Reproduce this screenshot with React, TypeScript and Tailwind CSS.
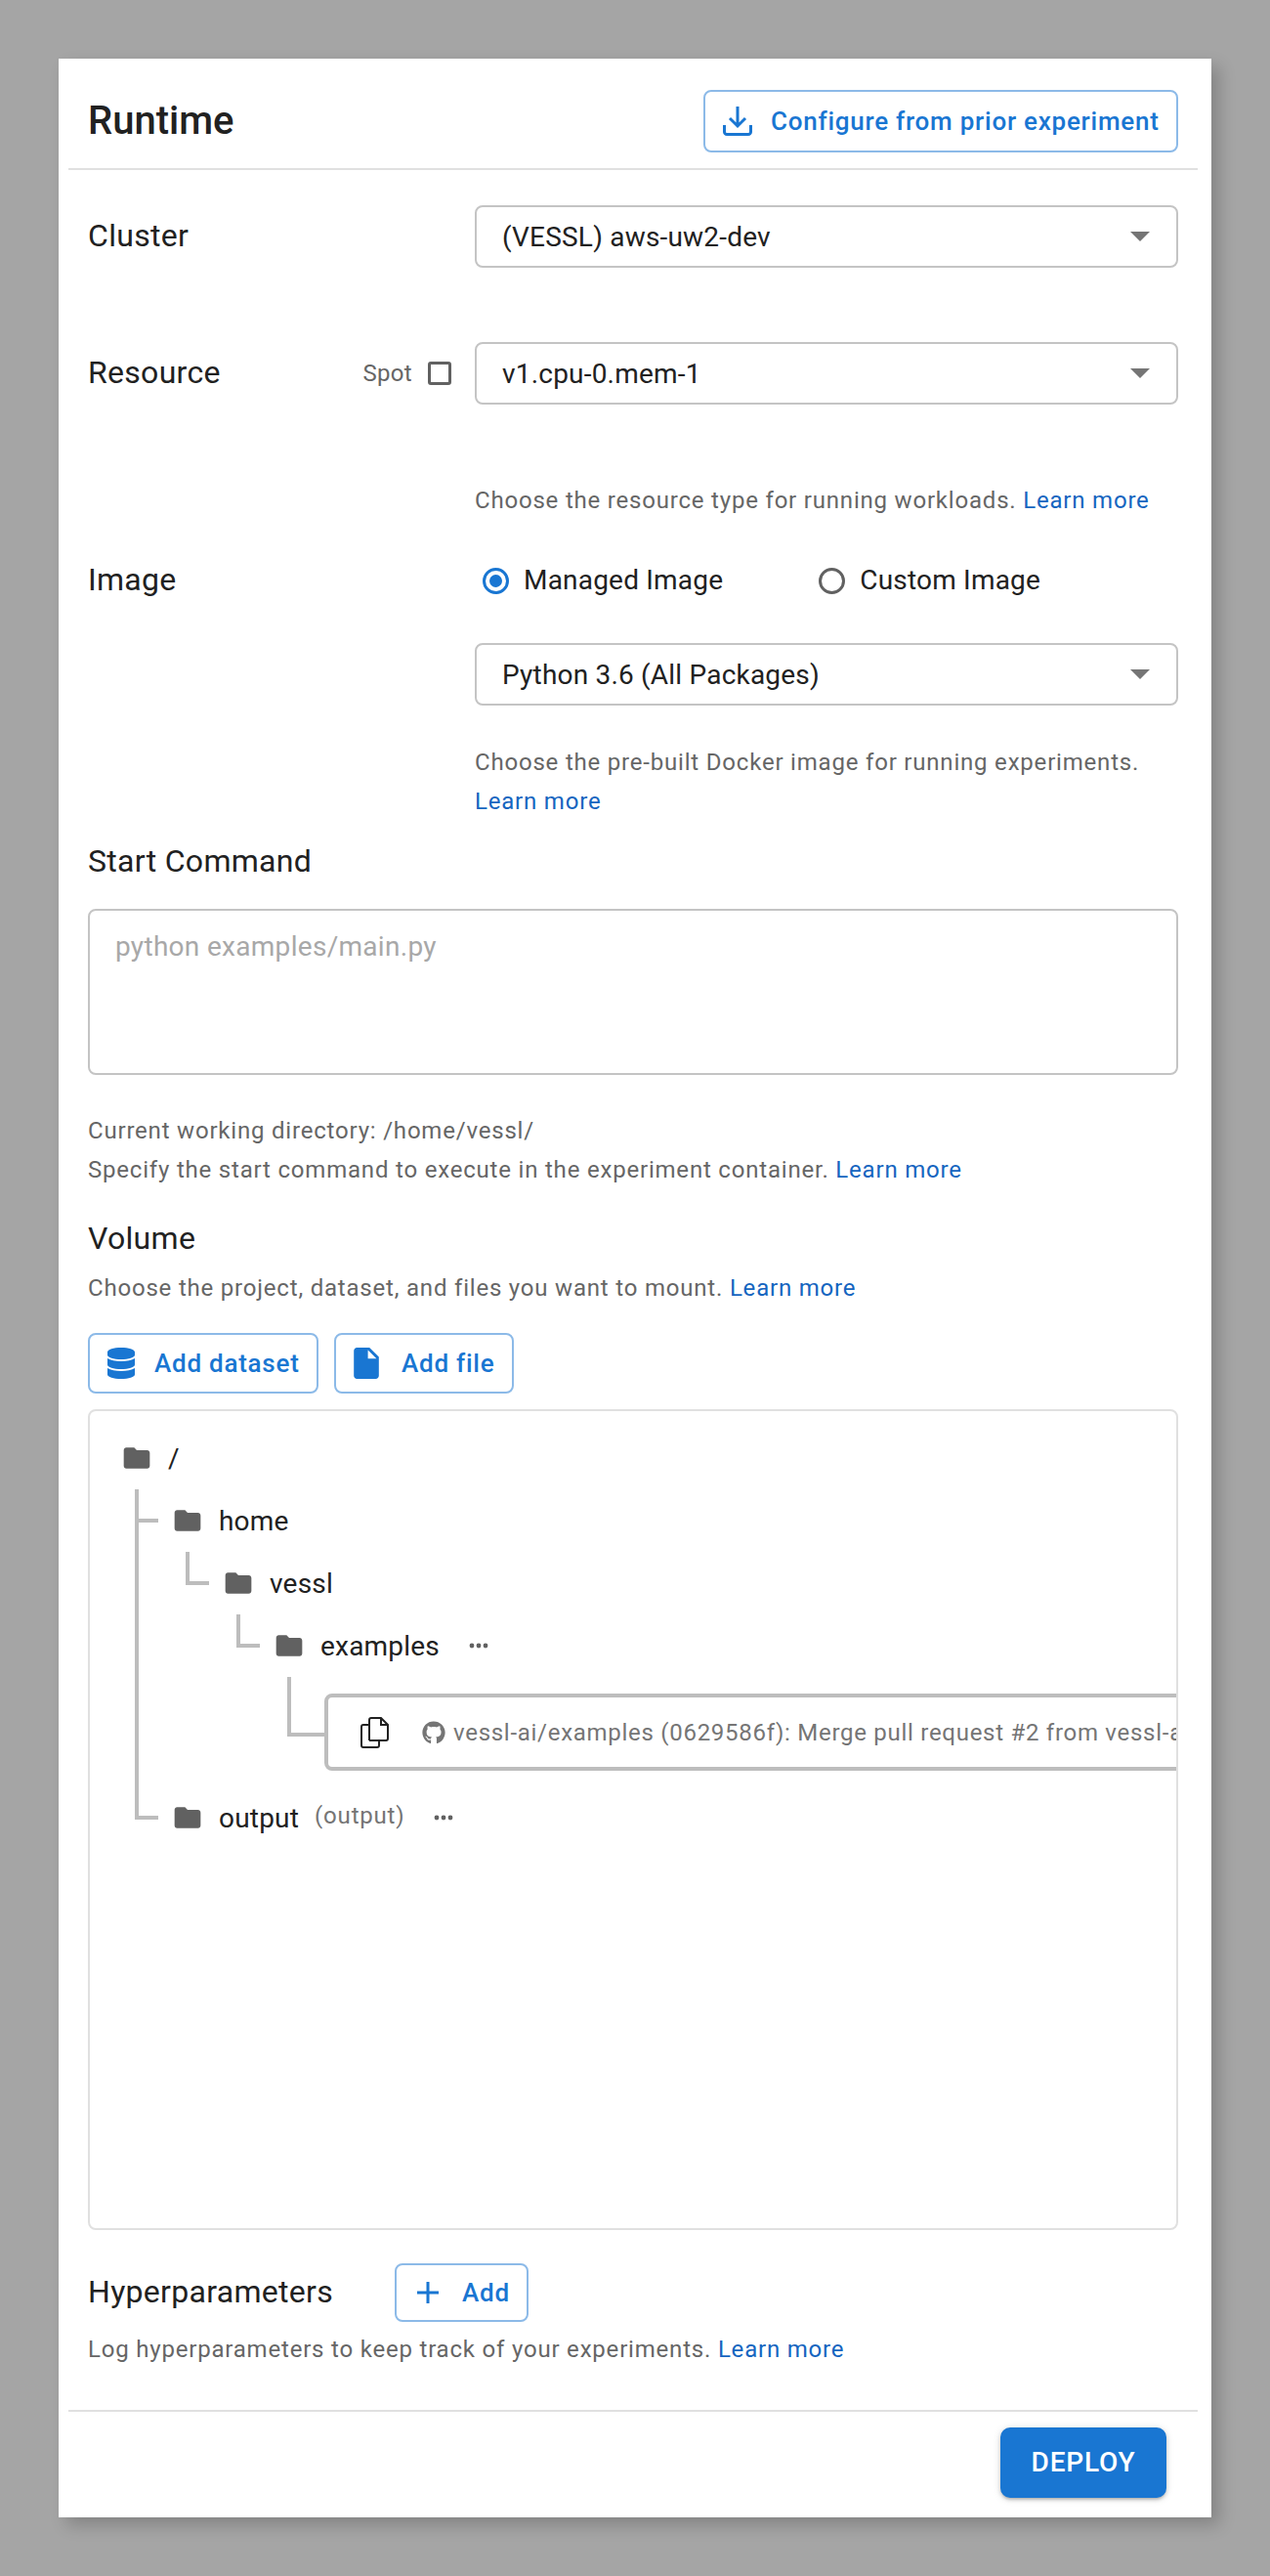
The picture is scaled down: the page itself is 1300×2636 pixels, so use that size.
import React from 'react';
import { FaDatabase, FaGithub } from 'react-icons/fa';

const FolderIcon = () => (
  <svg viewBox="0 0 24 24" className="w-8 h-8 shrink-0 fill-[#616161]">
    <path d="M10 4H4c-1.1 0-1.99.9-1.99 2L2 18c0 1.1.9 2 2 2h16c1.1 0 2-.9 2-2V8c0-1.1-.9-2-2-2h-8l-2-2z" />
  </svg>
);

const Dots = () => (
  <svg viewBox="0 0 20 6" className="w-5 h-[6px] fill-[#616161]">
    <circle cx="3" cy="3" r="2.4" />
    <circle cx="10" cy="3" r="2.4" />
    <circle cx="17" cy="3" r="2.4" />
  </svg>
);

const Select = ({ value }: { value: string }) => (
  <div className="flex items-center justify-between w-[720px] h-16 pl-[26px] pr-[27px] pt-[2px] border-2 border-[#c4c4c4] rounded-lg text-[28px] tracking-[0.2px] text-[#212121]">
    <span>{value}</span>
    <span className="w-0 h-0 -mt-[2px] border-x-[10px] border-x-transparent border-t-[10px] border-t-[#757575]" />
  </div>
);

const OutlineButton = ({ icon, label, className }: { icon: React.ReactNode; label: string; className: string }) => (
  <button className={`flex items-center border-2 border-[#8cbae8] rounded-lg text-[#1976d2] text-[26px] font-medium tracking-[0.75px] whitespace-nowrap ${className}`}>
    {icon}
    <span>{label}</span>
  </button>
);

const Help = ({ children, className = '' }: { children: React.ReactNode; className?: string }) => (
  <p className={`text-[24px] leading-10 tracking-[0.8px] text-[#666666] ${className}`}>{children}</p>
);

const LearnMore = () => <a className="text-[#1565c0]">Learn more</a>;

const Label = ({ children, className = '' }: { children: React.ReactNode; className?: string }) => (
  <h3 className={`text-[32px] leading-10 tracking-[0.3px] text-[#212121] ${className}`}>{children}</h3>
);

const Radio = ({ checked, label }: { checked?: boolean; label: string }) => (
  <div className="flex items-center gap-[15px] text-[28px] tracking-[0.2px] text-[#212121]">
    <span className={`flex items-center justify-center w-[27px] h-[27px] rounded-full border-[3px] ${checked ? 'border-[#1976d2]' : 'border-[#616161]'}`}>
      {checked && <span className="w-[13px] h-[13px] rounded-full bg-[#1976d2]" />}
    </span>
    {label}
  </div>
);

const TreeRow = ({ indent, children }: { indent: string; children: React.ReactNode }) => (
  <div className={`flex items-center h-16 gap-4 text-[28px] tracking-[0.2px] text-[#212121] ${indent}`}>
    <FolderIcon />
    <span className="pt-[2px]">{children}</span>
  </div>
);

const App: React.FC = () => {
  return (
    <div className="min-h-[2636px] bg-[#a5a5a5] pt-[60px] font-['Roboto',sans-serif]">
      <div className="w-[1180px] h-[2516px] ml-[60px] bg-white shadow-[8px_8px_16px_rgba(0,0,0,0.2)]">
        {/* Header */}
        <div className="flex items-center justify-between h-28 pt-4 pl-[30px] pr-[34px]">
          <h2 className="text-[40px] font-medium text-[#212121]">Runtime</h2>
          <OutlineButton
            className="w-[486px] h-16 pl-[18px]"
            label="Configure from prior experiment"
            icon={
              <svg viewBox="0 0 30 30" className="w-[30px] h-[30px] mr-[19px] fill-none stroke-[#1976d2] stroke-[3px]">
                <path d="M15 0v19M7 12l8 8 8-8" />
                <path d="M1.5 19v7a2.5 2.5 0 0 0 2.5 2.5h22a2.5 2.5 0 0 0 2.5-2.5v-7" />
              </svg>
            }
          />
        </div>
        <div className="h-[2px] w-[1156px] ml-[10px] bg-[#e0e0e0]" />

        <div className="pl-[30px] pr-[34px]">
          {/* Cluster */}
          <div className="flex items-center justify-between mt-9">
            <Label className="-mt-[2px]">Cluster</Label>
            <Select value="(VESSL) aws-uw2-dev" />
          </div>

          {/* Resource */}
          <div className="flex items-center justify-between mt-[76px]">
            <Label className="-mt-[2px]">Resource</Label>
            <div className="flex items-center">
              <span className="text-[24px] tracking-[0.3px] text-[#666666] mr-4">Spot</span>
              <span className="w-6 h-6 border-[3px] border-[#616161] rounded-[3px] mr-[24px]" />
              <Select value="v1.cpu-0.mem-1" />
            </div>
          </div>
          <Help className="mt-[78px] ml-[396px]">
            Choose the resource type for running workloads. <LearnMore />
          </Help>

          {/* Image */}
          <div className="flex mt-[42px]">
            <Label className="w-[396px] -mt-[1px]">Image</Label>
            <div className="w-[720px]">
              <div className="flex items-center h-10 pl-[8px] gap-[98px]">
                <Radio checked label="Managed Image" />
                <Radio label="Custom Image" />
              </div>
              <div className="mt-11">
                <Select value="Python 3.6 (All Packages)" />
              </div>
              <Help className="mt-[38px]">
                Choose the pre-built Docker image for running experiments. <LearnMore />
              </Help>
            </div>
          </div>

          {/* Start command */}
          <Label className="mt-[21px]">Start Command</Label>
          <textarea
            readOnly
            placeholder="python examples/main.py"
            className="block w-full h-[170px] mt-[29px] pt-[17px] pl-[26px] border-2 border-[#c4c4c4] rounded-lg text-[28px] leading-10 tracking-[0.3px] resize-none outline-none placeholder:text-[#a8a8a8]"
          />
          <Help className="mt-[37px]">Current working directory: /home/vessl/</Help>
          <Help>
            Specify the start command to execute in the experiment container. <LearnMore />
          </Help>

          {/* Volume */}
          <Label className="mt-[30px]">Volume</Label>
          <Help className="mt-[11px]">
            Choose the project, dataset, and files you want to mount. <LearnMore />
          </Help>
          <div className="flex gap-4 mt-[26px]">
            <OutlineButton
              className="w-[236px] h-[62px] pl-[18px]"
              label="Add dataset"
              icon={<FaDatabase className="w-7 h-8 mr-5 text-[#1976d2]" />}
            />
            <OutlineButton
              className="w-[184px] h-[62px] pl-[18px]"
              label="Add file"
              icon={
                <svg viewBox="4 2 16 20" className="w-[26px] h-8 mr-[23px] fill-[#1976d2]">
                  <path d="M6 2c-1.1 0-1.99.9-1.99 2L4 20c0 1.1.89 2 1.99 2H18c1.1 0 2-.9 2-2V8l-6-6H6zm7 7V3.5L18.5 9H13z" />
                </svg>
              }
            />
          </div>

          {/* File tree */}
          <div className="relative h-[840px] mt-4 pt-4 border-2 border-[#e0e0e0] rounded-lg overflow-hidden">
            <span className="absolute left-[46px] top-[80px] w-6 h-[338px] border-l-4 border-b-4 border-[#bdbdbd]" />
            <span className="absolute left-[50px] top-[110px] w-5 h-1 bg-[#bdbdbd]" />
            <span className="absolute left-[98px] top-[144px] w-6 h-[34px] border-l-4 border-b-4 border-[#bdbdbd]" />
            <span className="absolute left-[150px] top-[208px] w-6 h-[34px] border-l-4 border-b-4 border-[#bdbdbd]" />
            <span className="absolute left-[202px] top-[272px] w-[38px] h-[61px] border-l-4 border-b-4 border-[#bdbdbd]" />

            <TreeRow indent="ml-8">/</TreeRow>
            <TreeRow indent="ml-[84px]">home</TreeRow>
            <TreeRow indent="ml-[136px]">vessl</TreeRow>
            <div className="flex items-center">
              <TreeRow indent="ml-[188px]">examples</TreeRow>
              <span className="ml-[30px]">
                <Dots />
              </span>
            </div>
            <div className="h-28 pt-[17px] ml-[240px]">
              <div className="flex items-center w-[1000px] h-[79px] pl-[33px] border-4 border-[#bdbdbd] rounded-lg text-[24px] tracking-[0.72px] text-[#757575] whitespace-nowrap">
                <svg viewBox="0 0 29 32" className="w-[29px] h-8 mr-[34px] shrink-0 fill-none stroke-[#212121] stroke-2">
                  <path d="M9 24V3a2 2 0 0 1 2-2h10l7 7v14a2 2 0 0 1-2 2H9" />
                  <path d="M21 1v7h7" />
                  <path d="M9 8H3a2 2 0 0 0-2 2v19a2 2 0 0 0 2 2h14a2 2 0 0 0 2-2v-5" />
                </svg>
                <FaGithub className="w-6 h-6 mr-[8px] shrink-0 text-[#757575]" />
                vessl-ai/examples (0629586f): Merge pull request #2 from vessl-ai
              </div>
            </div>
            <div className="flex items-center">
              <TreeRow indent="ml-[84px]">output</TreeRow>
              <span className="ml-4 -mt-1 text-[24px] tracking-[0.8px] text-[#757575]">(output)</span>
              <span className="ml-[30px]">
                <Dots />
              </span>
            </div>
          </div>

          {/* Hyperparameters */}
          <div className="flex items-center mt-[34px]">
            <Label className="w-[314px] -mt-[2px]">Hyperparameters</Label>
            <OutlineButton
              className="w-[137px] h-[60px] pl-[21px]"
              label="Add"
              icon={
                <svg viewBox="0 0 22 22" className="w-[22px] h-[22px] mr-6 stroke-[#1976d2] stroke-[3px]">
                  <path d="M11 0v22M0 11h22" />
                </svg>
              }
            />
          </div>
          <Help className="mt-2">
            Log hyperparameters to keep track of your experiments. <LearnMore />
          </Help>
        </div>

        {/* Footer */}
        <div className="h-[2px] w-[1156px] ml-[10px] mt-[42px] bg-[#e0e0e0]" />
        <div className="flex justify-end mt-4 pr-[46px]">
          <button className="w-[170px] h-[72px] rounded-[10px] bg-[#1976d2] text-white text-[28px] font-medium tracking-[0.8px] shadow-[0_3px_3px_-2px_rgba(0,0,0,0.2),0_2px_4px_0_rgba(0,0,0,0.14),0_1px_8px_0_rgba(0,0,0,0.12)]">
            DEPLOY
          </button>
        </div>
      </div>
    </div>
  );
};

export default App;
